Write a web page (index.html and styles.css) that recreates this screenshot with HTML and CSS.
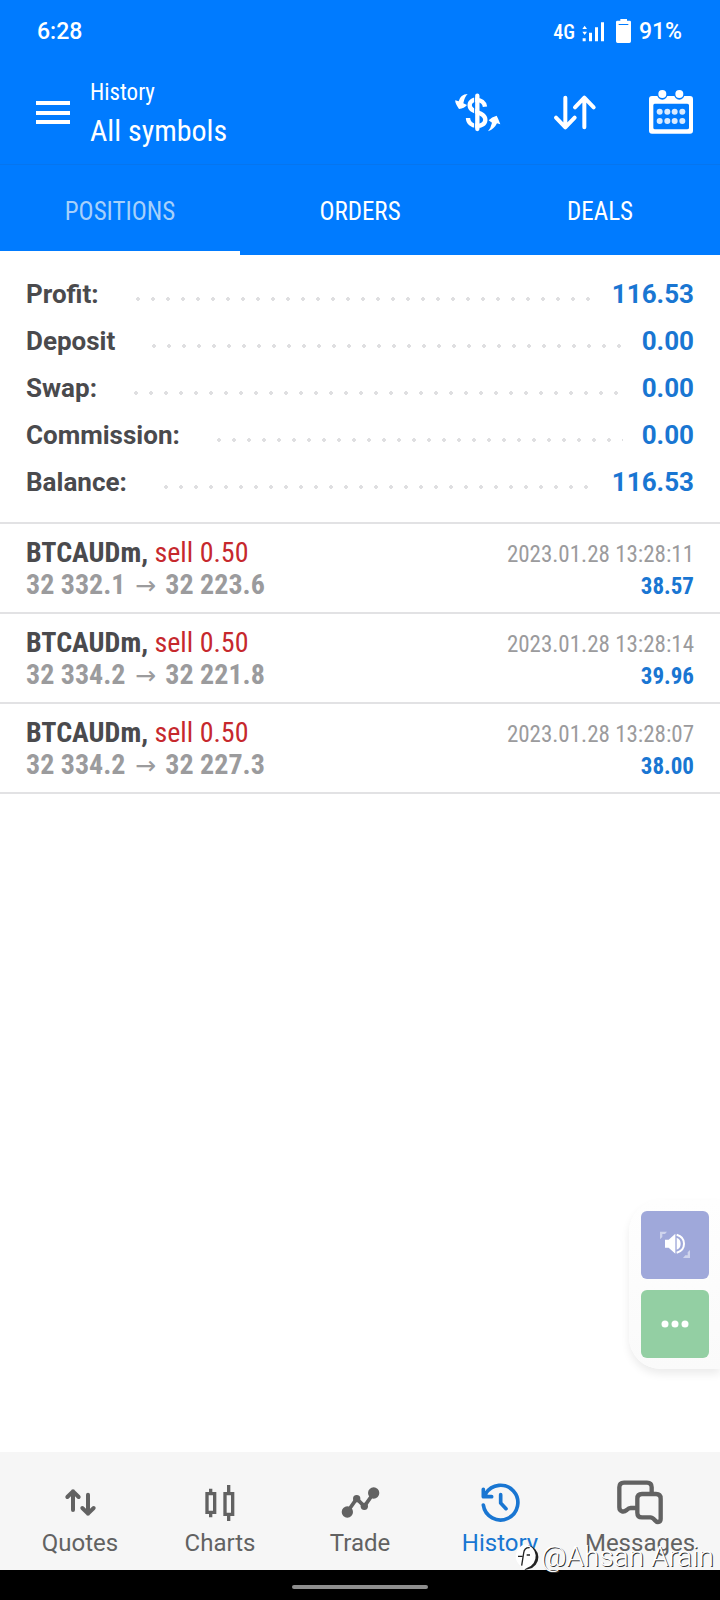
FILE: index.html
```html
<!DOCTYPE html>
<html lang="en">
<head>
<meta charset="utf-8">
<meta name="viewport" content="width=device-width, initial-scale=1">
<title>History</title>
<link rel="stylesheet" href="styles.css">
</head>
<body>
<div class="app">
  <header class="top">
    <div class="status">
      <span>6:28</span>
      <div class="status-right">
        <span class="network">4G</span>
        <svg class="signal" viewBox="666 56 69 63" width="23" height="21" fill="currentColor" aria-hidden="true">
          <path d="M668 108h9v9h-9zM687 91h9v26h-9zM705 75h9v42h-9zM723 60h9v57h-9zM674 70l7 10h-14zM674 98l7-10h-14z"/>
        </svg>
        <svg class="battery" viewBox="768 54 45 72" width="15" height="24" aria-hidden="true">
          <path fill="currentColor" d="M781 54h20v5h8q4 0 4 4v58q0 5-5 5h-35q-5 0-5-5V63q0-4 4-4h9z"/>
          <path fill="#007bff" d="M776 69h29v3h-29z"/>
        </svg>
        <span>91%</span>
      </div>
    </div>
    <div class="toolbar">
      <button class="menu" type="button" aria-label="Menu">
        <svg viewBox="0 0 34 24" width="34" height="24" fill="currentColor"><path d="M0 0h34v4H0zM0 10h34v4H0zM0 19h34v4H0z"/></svg>
      </button>
      <div class="titles">
        <div class="screen">History</div>
        <h1 class="filter">All symbols</h1>
      </div>
      <div class="actions">
        <button type="button" aria-label="Symbol">
          <svg viewBox="285 270 144 132" width="48" height="44">
            <path fill="none" stroke="currentColor" stroke-width="13" d="M375 320C372 295 330 292 329 315C329 342 376 332 376 360C374 386 324 383 324 354"/>
            <path fill="none" stroke="#007bff" stroke-width="3" d="M344 278v116"/>
            <path fill="none" stroke="currentColor" stroke-width="13" stroke-linecap="round" d="M352 287v100"/>
            <path fill="currentColor" d="M323 282Q301 283 296 304L286 301Q284 309 297 327Q313 325 321 315L310 310Q313 292 323 282zM384 394Q392 385 396 368L386 361Q395 350 410 347Q415 356 421 373L411 370Q403 387 384 394z"/>
          </svg>
        </button>
        <button type="button" aria-label="Sort">
          <svg viewBox="572 270 144 132" width="48" height="44" fill="none" stroke="currentColor" stroke-width="12" stroke-linecap="round" stroke-linejoin="round">
            <path d="M615 293v88M587 353l28 29 28-29M672 382v-88M644 322l28-29 28 29"/>
          </svg>
        </button>
        <button type="button" aria-label="Period">
          <svg viewBox="860 269 144 132" width="48" height="44" fill="currentColor">
            <path fill-rule="evenodd" d="M875 287h114q9 0 9 9v95q0 9-9 9H875q-9 0-9-9v-95q0-9 9-9zM883 310q-4 0-4 5v67q0 5 5 5h96q6 0 6-5v-67q0-5-5-5z"/>
            <g fill="#007bff"><circle cx="906" cy="282" r="16"/><circle cx="957" cy="282" r="16"/></g>
            <g><circle cx="906" cy="281" r="12"/><circle cx="957" cy="281" r="12"/></g>
            <g opacity=".85"><circle cx="898" cy="334" r="9"/><circle cx="921" cy="334" r="9"/><circle cx="943" cy="334" r="9"/><circle cx="966" cy="334" r="9"/><circle cx="898" cy="362" r="9"/><circle cx="921" cy="362" r="9"/><circle cx="943" cy="362" r="9"/><circle cx="966" cy="362" r="9"/></g>
          </svg>
        </button>
      </div>
    </div>
    <div class="tabs" role="tablist">
      <button class="tab tab-active" type="button" role="tab" aria-selected="true">POSITIONS</button>
      <button class="tab" type="button" role="tab" aria-selected="false">ORDERS</button>
      <button class="tab" type="button" role="tab" aria-selected="false">DEALS</button>
    </div>
  </header>

  <main class="content">
    <dl class="summary">
      <div class="sum-row"><dt>Profit:</dt><dd>116.53</dd></div>
      <div class="sum-row"><dt>Deposit</dt><dd>0.00</dd></div>
      <div class="sum-row"><dt>Swap:</dt><dd>0.00</dd></div>
      <div class="sum-row"><dt>Commission:</dt><dd>0.00</dd></div>
      <div class="sum-row"><dt>Balance:</dt><dd>116.53</dd></div>
    </dl>
    <ul class="deals">
      <li class="deal">
        <div class="deal-line"><span class="symbol">BTCAUDm, <span class="side">sell 0.50</span></span><time class="time">2023.01.28 13:28:11</time></div>
        <div class="deal-line"><span class="prices">32 332.1 <span class="arrow">→</span> 32 223.6</span><span class="result">38.57</span></div>
      </li>
      <li class="deal">
        <div class="deal-line"><span class="symbol">BTCAUDm, <span class="side">sell 0.50</span></span><time class="time">2023.01.28 13:28:14</time></div>
        <div class="deal-line"><span class="prices">32 334.2 <span class="arrow">→</span> 32 221.8</span><span class="result">39.96</span></div>
      </li>
      <li class="deal">
        <div class="deal-line"><span class="symbol">BTCAUDm, <span class="side">sell 0.50</span></span><time class="time">2023.01.28 13:28:07</time></div>
        <div class="deal-line"><span class="prices">32 334.2 <span class="arrow">→</span> 32 227.3</span><span class="result">38.00</span></div>
      </li>
    </ul>
  </main>

  <nav class="nav">
    <a class="nav-item" href="#quotes">
      <svg viewBox="165 117 150 144" width="50" height="48" fill="none" stroke="currentColor" stroke-width="12" stroke-linecap="round" stroke-linejoin="round"><path d="M219 210v-56M202 171l17-17 17 17M264 164v57M247 204l17 17 17-17"/></svg>
      <span>Quotes</span>
    </a>
    <a class="nav-item" href="#charts">
      <svg viewBox="587 117 150 144" width="50" height="48" fill="none" stroke="currentColor" stroke-width="10"><path d="M623 161h23v56h-23zM634 146v14M634 218v14M677 161h23v62h-23zM688 135v25M688 224v19"/></svg>
      <span>Charts</span>
    </a>
    <a class="nav-item" href="#trade">
      <svg viewBox="1005 117 150 144" width="50" height="48" fill="currentColor"><path fill="none" stroke="currentColor" stroke-width="11" stroke-linejoin="round" d="M1042 216l28-40 23 23 28-40"/><circle cx="1042" cy="216" r="17"/><circle cx="1121" cy="159" r="17"/><circle cx="1070" cy="176" r="11"/><circle cx="1093" cy="199" r="11"/></svg>
      <span>Trade</span>
    </a>
    <a class="nav-item nav-active" href="#history" aria-current="page">
      <svg viewBox="345 117 150 144" width="50" height="48" fill="none" stroke="currentColor" stroke-width="11" stroke-linecap="round" stroke-linejoin="round"><path d="M370 195A52 52 0 1 0 377 161M370 148v22h25M422 164v25l16 17"/><path fill="currentColor" stroke="none" d="M366 146l25 27h-25z"/></svg>
      <span>History</span>
    </a>
    <a class="nav-item" href="#messages">
      <svg viewBox="764 117 150 144" width="50" height="48" fill="none" stroke="currentColor" stroke-width="13" stroke-linejoin="round"><path d="M831 204h-20q-6 0-12 6-7 6-14 4-8-2-8-12v-60q0-14 14-14h69q14 0 14 14v16"/><path d="M845 162h42q14 0 14 14v61q0 9-8 9-5 0-10-6-6-8-13-8h-25q-14 0-14-14v-42q0-14 14-14z"/></svg>
      <span>Messages</span>
    </a>
  </nav>
  <div class="gesture"><div class="pill"></div></div>

  <aside class="float">
    <button class="float-btn float-sound" type="button" aria-label="Sound">
      <svg viewBox="180 150 90 90" width="30" height="30" fill="#fff"><path d="M195 179h11l20-18v60l-20-18h-11z"/><path d="M230 173q12 5 12 18t-12 18z"/><path fill="none" stroke="#fff" stroke-width="6" d="M230 164q22 6 22 27t-22 27"/><path opacity=".5" d="M180 155h21l-6 7h-8v9l-7 7zM270 234h-21l7-8h7v-9l7-7z"/></svg>
    </button>
    <button class="float-btn float-more" type="button" aria-label="More">
      <svg viewBox="0 0 28 8" width="28" height="8" fill="#fff"><circle cx="4" cy="4" r="3.5"/><circle cx="14" cy="4" r="3.5"/><circle cx="24" cy="4" r="3.5"/></svg>
    </button>
  </aside>

  <div class="credit">
    <svg viewBox="456 318 84 78" width="28" height="26" aria-hidden="true"><path fill="#222" d="M504 322a36 36 0 0 1 2 71l-12 3 2-20z"/><path fill="#fff" d="M496 319a36 36 0 0 1 6 70l-10 6-4-8a36 36 0 0 1 8-68z"/><path fill="none" stroke="#222" stroke-width="4" d="M509 329q-16-1-18 16l-6 38M474 355h13M500 351h10"/></svg>
    <span>@Ahsan Arain</span>
  </div>
</div>
</body>
</html>
```
FILE: styles.css
```css
* { box-sizing: border-box; }

body {
  margin: 0;
  background: #fff;
  font-family: Roboto, "Liberation Sans", sans-serif;
  color: #4a4a4d;
}

button {
  padding: 0;
  border: 0;
  background: none;
  color: inherit;
  font: inherit;
}

svg { display: block; }

.app {
  position: relative;
  min-height: 100vh;
  display: flex;
  flex-direction: column;
}

.top {
  background: #007bff;
  color: #fff;
}

.status {
  display: flex;
  justify-content: space-between;
  align-items: center;
  padding: 18px 38px 14px 37px;
  font-size: 23px;
  font-weight: 500;
  line-height: 28px;
}

.status-right {
  display: flex;
  align-items: center;
}

.network {
  font-family: "Roboto Condensed", Roboto, sans-serif;
  font-size: 20px;
  font-weight: 500;
}

.signal {
  margin: 0 11px 2px 7px;
}

.battery {
  margin: 0 8px 2px 0;
}

.toolbar {
  display: flex;
  align-items: center;
  padding: 16px 25px 13px 36px;
  border-bottom: 1px solid #0675ee;
  font-family: "Roboto Condensed", Roboto, sans-serif;
}

.titles {
  flex: 1;
  margin-left: 20px;
}

.screen {
  font-size: 23px;
  line-height: 34px;
}

.filter {
  margin: 0;
  font-size: 30px;
  font-weight: 400;
  line-height: 41px;
}

.menu { padding-bottom: 2px; }

.actions {
  display: flex;
  gap: 48px;
  padding-bottom: 3px;
}

.tabs {
  display: grid;
  grid-template-columns: repeat(3, 1fr);
}

.tab {
  padding: 31px 0 23px;
  border-bottom: 4px solid transparent;
  font-family: "Roboto Condensed", Roboto, sans-serif;
  font-size: 25px;
  line-height: 32px;
}

.tab-active {
  border-color: #fff;
  color: #a6d0fb;
}

.content { flex: 1; }

.summary {
  margin: 0;
  padding: 16px 26px;
  border-bottom: 2px solid #e2e2e4;
}

.sum-row {
  display: flex;
  align-items: center;
  font-size: 26px;
  font-weight: 700;
  line-height: 47px;
}

.sum-row::after {
  content: "";
  order: 1;
  flex: 1;
  height: 4px;
  margin: 9px 19px 0 37px;
  background: radial-gradient(circle at 2px 2px, #dfdfe1 2px, transparent 2px) 0 0 / 15px 4px repeat-x;
}

.sum-row dd {
  order: 2;
  margin: 0;
  color: #1976d2;
}

.deals {
  margin: 0;
  padding: 0;
  list-style: none;
  font-family: "Roboto Condensed", Roboto, sans-serif;
}

.deal {
  padding: 13px 26px 11px;
  border-bottom: 2px solid #e2e2e4;
}

.deal-line {
  display: flex;
  justify-content: space-between;
  align-items: baseline;
  line-height: 32px;
}

.symbol {
  font-size: 28px;
  font-weight: 700;
}

.side {
  color: #c6282d;
  font-weight: 400;
}

.time {
  color: #9b9b9d;
  font-size: 23px;
  line-height: 26px;
}

.prices {
  color: #9b9b9d;
  font-size: 28px;
  font-weight: 700;
}

.arrow {
  margin: 0 3px;
  font-family: "DejaVu Sans", sans-serif;
  font-size: 25px;
  font-weight: 400;
  line-height: 20px;
}

.result {
  color: #1976d2;
  font-size: 23px;
  font-weight: 700;
  line-height: 26px;
}

.nav {
  display: grid;
  grid-template-columns: repeat(5, 1fr);
  padding: 27px 10px 12px;
  background: #f6f6f6;
}

.nav-item {
  display: flex;
  flex-direction: column;
  align-items: center;
  gap: 1px;
  color: #626262;
  font-size: 24px;
  line-height: 30px;
  text-decoration: none;
}

.nav-active { color: #1976d2; }

.gesture {
  display: flex;
  justify-content: center;
  padding: 15px 0 11px;
  background: #000;
}

.pill {
  width: 136px;
  height: 4px;
  border-radius: 2px;
  background: #8e8e8e;
}

.float {
  position: absolute;
  right: 0;
  bottom: 231px;
  display: flex;
  flex-direction: column;
  gap: 11px;
  padding: 11px 11px 11px 12px;
  border-radius: 32px 0 0 32px;
  background: linear-gradient(#fefefe, #fafafa);
  box-shadow: 0 5px 8px rgba(0, 0, 0, 0.08);
}

.float-btn {
  display: grid;
  place-items: center;
  width: 68px;
  height: 68px;
  border-radius: 6px;
}

.float-sound { background: #9fa8da; }
.float-more { background: #93cfa3; }

.credit {
  position: absolute;
  right: 6px;
  bottom: 27px;
  display: flex;
  align-items: center;
  gap: 1px;
  color: #fff;
  font-size: 28px;
  font-weight: 300;
  line-height: 32px;
  text-shadow: 1px 1px 0 #333;
}
```
